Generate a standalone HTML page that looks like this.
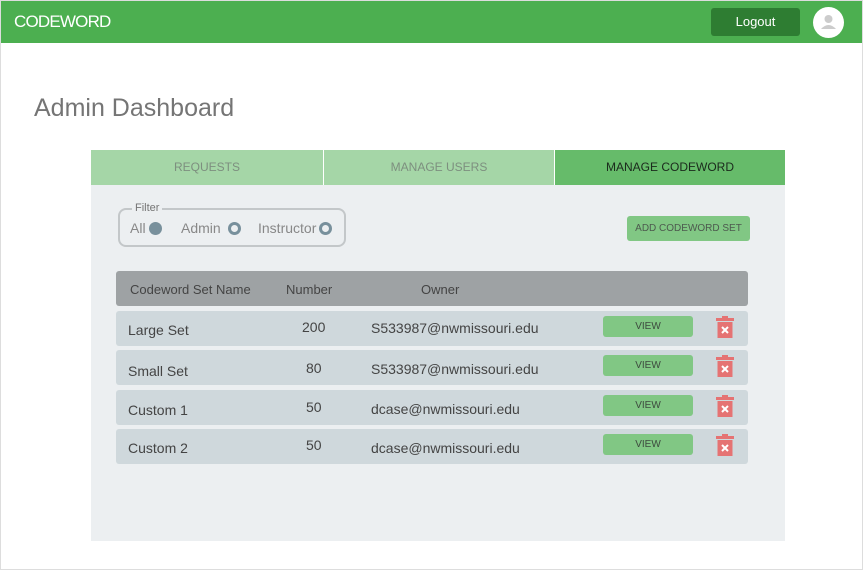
<!DOCTYPE html>
<html><head><style>
*{margin:0;padding:0;box-sizing:border-box}
body{width:863px;height:570px;background:#fff;font-family:"Liberation Sans",sans-serif;position:relative;overflow:hidden}
.frame{position:absolute;left:0;top:0;width:863px;height:570px;border:1px solid #ddd;pointer-events:none}
.hdr{position:absolute;left:0;top:0;width:863px;height:43px;background:#4caf50;border-top:1px solid #aaa}
.logo{position:absolute;left:14px;top:11px;color:#fff;font-size:17px;letter-spacing:-0.8px}
.lo{position:absolute;left:711px;top:7px;width:89px;height:28px;background:#2e7d32;border-radius:3px;color:#fff;font-size:13px;text-align:center;line-height:28px}
.av{position:absolute;left:813px;top:6px;width:31px;height:31px;border-radius:50%;background:#fff}
h1{position:absolute;left:34px;top:94px;font-size:25px;font-weight:normal;color:#757575}
.tab{position:absolute;top:150px;height:35px;line-height:35px;text-align:center;font-size:12px;color:#7d8f7f}
.panel{position:absolute;left:91px;top:185px;width:694px;height:356px;background:#eceff1}
.fs{position:absolute;left:118px;top:208px;width:228px;height:39px;border:2px solid #c3c7c9;border-radius:8px}
.fl{position:absolute;left:132px;top:202px;background:#eceff1;padding:0 3px;font-size:11px;color:#757575}
.fi{position:absolute;top:220px;font-size:14px;color:#888}
.rad{display:inline-block;width:13px;height:13px;border-radius:50%;vertical-align:-2px;margin-left:3px}
.add{position:absolute;left:627px;top:216px;width:123px;height:25px;background:#81c784;border-radius:3px;font-size:10px;color:#4d5a4e;text-align:center;line-height:25px}
.th{position:absolute;left:116px;top:271px;width:632px;height:35px;background:#9ea2a4;border-radius:3px;font-size:13px;color:#444}
.row{position:absolute;left:116px;width:632px;height:35px;background:#cfd8dc;border-radius:3px;font-size:14px;color:#444}
.row span,.th span{position:absolute}
.v{position:absolute;left:487px;top:5px;width:90px;height:21px;background:#81c784;border-radius:3px;font-size:10px;text-align:center;line-height:21px;color:#3d4a3e}
.tr{position:absolute;left:600px;top:5px}
</style></head><body>
<div class="hdr"><div class="logo">CODEWORD</div><div class="lo">Logout</div>
<div class="av"><svg width="31" height="31"><circle cx="15.5" cy="12" r="4" fill="#ccc"/><path d="M8 22 q7.5-8 15 0z" fill="#ccc"/></svg></div></div>
<h1>Admin Dashboard</h1>
<div class="tab" style="left:91px;width:232px;background:#a5d6a7">REQUESTS</div>
<div class="tab" style="left:324px;width:230px;background:#a5d6a7">MANAGE USERS</div>
<div class="tab" style="left:555px;width:230px;background:#66bb6a;color:#1b2a1c">MANAGE CODEWORD</div>
<div class="panel"></div>
<div class="fs"></div><div class="fl">Filter</div>
<div class="fi" style="left:130px">All<span class="rad" style="background:#78909c"></span></div>
<div class="fi" style="left:181px">Admin <span class="rad" style="border:3px solid #78909c"></span></div>
<div class="fi" style="left:258px">Instructor<span class="rad" style="border:3px solid #78909c"></span></div>
<div class="add">ADD CODEWORD SET</div>
<div class="th"><span style="left:14px;top:11px">Codeword Set Name</span><span style="left:170px;top:11px">Number</span><span style="left:305px;top:11px">Owner</span></div>
<div class="row" style="top:311px"><span style="left:12px;top:11px">Large Set</span><span style="left:186px;top:8px">200</span><span style="left:255px;top:9px">S533987@nwmissouri.edu</span><div class="v">VIEW</div><svg class="tr" width="18" height="22"><rect x="0" y="2" width="18" height="3" fill="#e57373"/><rect x="6" y="0" width="6" height="3" fill="#e57373"/><rect x="1.5" y="6" width="15" height="16" fill="#e57373"/><path d="M6 11l6 6M12 11l-6 6" stroke="#fff" stroke-width="2"/></svg></div>
<div class="row" style="top:350px"><span style="left:12px;top:13px">Small Set</span><span style="left:190px;top:10px">80</span><span style="left:255px;top:11px">S533987@nwmissouri.edu</span><div class="v">VIEW</div><svg class="tr" width="18" height="22"><rect x="0" y="2" width="18" height="3" fill="#e57373"/><rect x="6" y="0" width="6" height="3" fill="#e57373"/><rect x="1.5" y="6" width="15" height="16" fill="#e57373"/><path d="M6 11l6 6M12 11l-6 6" stroke="#fff" stroke-width="2"/></svg></div>
<div class="row" style="top:390px"><span style="left:12px;top:12px">Custom 1</span><span style="left:190px;top:9px">50</span><span style="left:255px;top:11px">dcase@nwmissouri.edu</span><div class="v">VIEW</div><svg class="tr" width="18" height="22"><rect x="0" y="2" width="18" height="3" fill="#e57373"/><rect x="6" y="0" width="6" height="3" fill="#e57373"/><rect x="1.5" y="6" width="15" height="16" fill="#e57373"/><path d="M6 11l6 6M12 11l-6 6" stroke="#fff" stroke-width="2"/></svg></div>
<div class="row" style="top:429px"><span style="left:12px;top:11px">Custom 2</span><span style="left:190px;top:8px">50</span><span style="left:255px;top:11px">dcase@nwmissouri.edu</span><div class="v">VIEW</div><svg class="tr" width="18" height="22"><rect x="0" y="2" width="18" height="3" fill="#e57373"/><rect x="6" y="0" width="6" height="3" fill="#e57373"/><rect x="1.5" y="6" width="15" height="16" fill="#e57373"/><path d="M6 11l6 6M12 11l-6 6" stroke="#fff" stroke-width="2"/></svg></div>
<div class="frame"></div>
</body></html>
